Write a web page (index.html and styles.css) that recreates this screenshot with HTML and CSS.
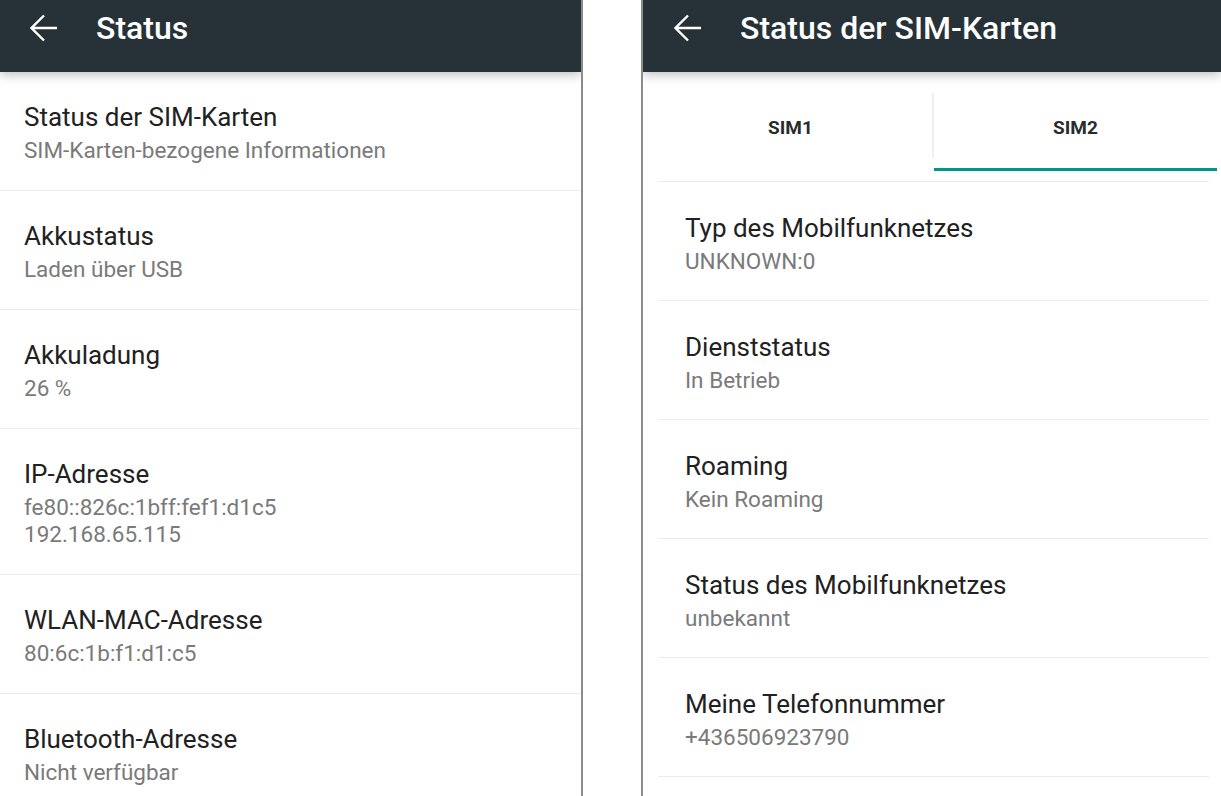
FILE: index.html
```html
<!DOCTYPE html>
<html lang="de">
<head>
<meta charset="utf-8">
<title>Status</title>
<link rel="stylesheet" href="styles.css">
</head>
<body>
<div class="screens">
  <section class="panel panel-left">
    <header class="toolbar">
      <svg class="back" width="28" height="28" viewBox="0 0 28 28"><path d="M27 14H2M14 1.5L1.5 14L14 26.5" fill="none" stroke="#fff" stroke-width="2.4" stroke-linejoin="miter"/></svg>
      <h1 class="toolbar-title">Status</h1>
    </header>
    <ul class="list list-left">
      <li class="item"><div class="item-title">Status der SIM-Karten</div><div class="item-sub">SIM-Karten-bezogene Informationen</div></li>
      <li class="item"><div class="item-title">Akkustatus</div><div class="item-sub">Laden über USB</div></li>
      <li class="item"><div class="item-title">Akkuladung</div><div class="item-sub">26 %</div></li>
      <li class="item"><div class="item-title">IP-Adresse</div><div class="item-sub">fe80::826c:1bff:fef1:d1c5<br>192.168.65.115</div></li>
      <li class="item"><div class="item-title">WLAN-MAC-Adresse</div><div class="item-sub">80:6c:1b:f1:d1:c5</div></li>
      <li class="item"><div class="item-title">Bluetooth-Adresse</div><div class="item-sub">Nicht verfügbar</div></li>
    </ul>
  </section>
  <div class="gap"></div>
  <section class="panel panel-right">
    <header class="toolbar">
      <svg class="back" width="28" height="28" viewBox="0 0 28 28"><path d="M27 14H2M14 1.5L1.5 14L14 26.5" fill="none" stroke="#fff" stroke-width="2.4" stroke-linejoin="miter"/></svg>
      <h1 class="toolbar-title">Status der SIM-Karten</h1>
    </header>
    <div class="tabs">
      <div class="tab">SIM1</div>
      <div class="tab-sep"></div>
      <div class="tab tab-active">SIM2</div>
    </div>
    <ul class="list list-right">
      <li class="item"><div class="item-title">Typ des Mobilfunknetzes</div><div class="item-sub">UNKNOWN:0</div></li>
      <li class="item"><div class="item-title">Dienststatus</div><div class="item-sub">In Betrieb</div></li>
      <li class="item"><div class="item-title">Roaming</div><div class="item-sub">Kein Roaming</div></li>
      <li class="item"><div class="item-title">Status des Mobilfunknetzes</div><div class="item-sub">unbekannt</div></li>
      <li class="item"><div class="item-title">Meine Telefonnummer</div><div class="item-sub">+436506923790</div></li>
    </ul>
  </section>
</div>
</body>
</html>
```

FILE: styles.css
```css
* { box-sizing: border-box; }
html, body {
  margin: 0;
  padding: 0;
  background: #fff;
  width: 1221px;
  height: 796px;
  overflow: hidden;
  font-family: Roboto, "Liberation Sans", Arial, sans-serif;
}
.screens {
  display: flex;
  height: 796px;
}
.panel {
  display: flex;
  flex-direction: column;
  background: #fff;
  overflow: hidden;
}
.panel-left {
  width: 583px;
  border-right: 2px solid #8c8c8c;
}
.gap {
  width: 58px;
  flex: none;
}
.panel-right {
  flex: 1;
  border-left: 2px solid #8c8c8c;
}
.toolbar {
  flex: none;
  height: 72px;
  background: #263238;
  display: flex;
  align-items: center;
  padding: 0 0 16px 30px;
  position: relative;
  z-index: 2;
  box-shadow: 0 3px 10px rgba(0, 0, 0, 0.25);
}
.panel-right .toolbar { padding-left: 31px; }
.back {
  flex: none;
  display: block;
}
.toolbar-title {
  margin: 0 0 0 38px;
  font-size: 32px;
  font-weight: 500;
  color: #fff;
  line-height: 1;
}
.list {
  list-style: none;
  margin: 0;
  padding: 0;
}
.item {
  padding: 29px 24px 26px;
  border-bottom: 1px solid #ececec;
}
.item-title {
  font-size: 26px;
  line-height: 32px;
  color: #212121;
}
.item-sub {
  margin-top: 4px;
  font-size: 22.5px;
  line-height: 27px;
  color: #7a7a7a;
}
.tabs {
  flex: none;
  display: flex;
  align-items: flex-start;
  margin: 21px 4px 0 6px;
  height: 78px;
}
.tab {
  flex: 1;
  height: 78px;
  display: flex;
  align-items: center;
  justify-content: center;
  padding-bottom: 7px;
  font-size: 19px;
  font-weight: 700;
  color: #2b2b2b;
  border-bottom: 3px solid transparent;
}
.tab-active {
  border-bottom-color: #009688;
}
.tab-sep {
  flex: none;
  width: 2px;
  height: 65px;
  background: #efefef;
}
.list-right {
  margin: 10px 12px 0 15px;
  border-top: 1px solid #ececec;
}
.list-right .item {
  padding: 30px 27px 25px;
}
```
